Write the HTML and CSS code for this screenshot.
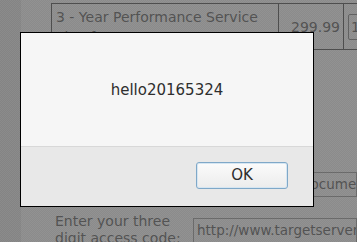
FILE: index.html
```html
<!DOCTYPE html>
<html>
<head>
<meta charset="utf-8">
<link rel="stylesheet" href="styles.css">
</head>
<body>
<div class="page">
  <div class="gutter"></div>
  <div class="content">
    <div class="order">
      <div class="row">
        <div class="lead"></div>
        <div class="desc">3 - Year Performance Service Plan for Laptops</div>
        <div class="price">299.99</div>
        <div class="qty"><span class="qtybox">1</span></div>
      </div>
    </div>
    <div class="form">
      <div class="field-row first">
        <div class="label"></div>
        <div class="input">';&lt;script&gt;alert(document.cookie)&lt;/script&gt;</div>
      </div>
      <div class="field-row second">
        <div class="label">Enter your three digit access code:</div>
        <div class="input">http://www.targetserver.com/</div>
      </div>
    </div>
  </div>
</div>
<div class="overlay"></div>
<div class="dialog">
  <div class="dialog-body">hello20165324</div>
  <div class="dialog-foot"><button class="ok">OK</button></div>
</div>
</body>
</html>
```
FILE: styles.css
```css
html, body {
  margin: 0;
  padding: 0;
  width: 357px;
  height: 242px;
  overflow: hidden;
  font-family: "DejaVu Sans", sans-serif;
}
body {
  background: #ffffff;
  position: relative;
}
.page {
  display: flex;
  height: 242px;
}
.gutter {
  flex: 0 0 21px;
  background: #e6e6e6;
}
.content {
  flex: 1;
  min-width: 0;
  background: #ffffff;
  color: #333333;
  font-size: 14px;
  padding-top: 3px;
}
.row {
  display: grid;
  grid-template-columns: 30px 227px 65px 1fr;
}
.row > div {
  border-left: 1px solid #222;
  border-top: 1px solid #222;
  border-bottom: 1px solid #222;
}
.row > .lead {
  border: none;
}
.desc {
  padding: 3px 4px 2px 4px;
  line-height: 20px;
  height: 40px;
  overflow: hidden;
}
.price {
  display: flex;
  align-items: center;
  justify-content: flex-end;
  padding-right: 3px;
}
.qty {
  display: flex;
  align-items: flex-start;
  padding: 10px 0 0 4px;
}
.qtybox {
  display: block;
  width: 20px;
  height: 24px;
  border: 1px solid #666;
  border-radius: 2px;
  line-height: 24px;
  padding-left: 2px;
}
.form {
  padding-left: 34px;
}
.field-row {
  display: flex;
  align-items: center;
  gap: 8px;
}
.field-row.first {
  margin-top: 122px;
}
.field-row.second {
  margin-top: 16px;
}
.label {
  flex: 0 0 130px;
  font-size: 14px;
  line-height: 17px;
}
.input {
  flex: 1;
  min-width: 0;
  height: 23px;
  border: 1px solid #888;
  font-size: 13.5px;
  line-height: 23px;
  padding-left: 3px;
  white-space: nowrap;
  overflow: hidden;
  color: #333;
}
.overlay {
  position: absolute;
  inset: 0;
  background-color: rgba(100, 100, 100, 0.7);
  background-image: repeating-conic-gradient(rgba(0, 0, 0, 0.05) 0 25%, transparent 0 50%);
  background-size: 2px 2px;
}
.dialog {
  position: absolute;
  left: 20px;
  top: 32px;
  width: 292px;
  height: 173px;
  border: 1px solid #000;
  display: flex;
  flex-direction: column;
  background: #f6f6f6;
}
.dialog-body {
  height: 113px;
  display: flex;
  align-items: center;
  justify-content: center;
  font-size: 15px;
  color: #2e2e2e;
  border-bottom: 1px solid #d8d8d8;
}
.dialog-foot {
  flex: 1;
  background: #e8e8e8;
  display: flex;
  justify-content: flex-end;
  align-items: center;
  padding-right: 25px;
  padding-bottom: 3px;
}
.ok {
  width: 92px;
  height: 27px;
  border: 1px solid #7fa8c8;
  border-radius: 3px;
  background: linear-gradient(#fbfbfb, #ececec);
  box-shadow: inset 0 0 0 1px #d6e6f2;
  font-family: "DejaVu Sans", sans-serif;
  font-size: 15px;
  color: #2e2e2e;
  padding: 0;
}
```
